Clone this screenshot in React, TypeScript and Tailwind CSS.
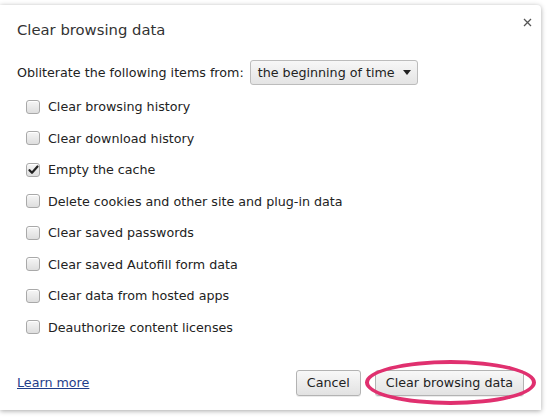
import React from "react";

const items = [
  { label: "Clear browsing history", checked: false },
  { label: "Clear download history", checked: false },
  { label: "Empty the cache", checked: true },
  { label: "Delete cookies and other site and plug-in data", checked: false },
  { label: "Clear saved passwords", checked: false },
  { label: "Clear saved Autofill form data", checked: false },
  { label: "Clear data from hosted apps", checked: false },
  { label: "Deauthorize content licenses", checked: false },
];

function Checkbox({ checked }: { checked: boolean }) {
  return (
    <span className="relative flex h-[14px] w-[14px] items-center justify-center rounded-[3px] border border-[#a9a9a9] bg-gradient-to-b from-[#f6f6f6] to-[#dedede] shadow-[inset_0_1px_0_#fff]">
      {checked && (
        <svg width="11" height="10" viewBox="0 0 11 10" className="absolute left-[1px] top-[1px]">
          <path d="M1.5 5.2 L4 7.8 L9.5 1.5" fill="none" stroke="#222" strokeWidth="2.2" strokeLinecap="round" strokeLinejoin="round" />
        </svg>
      )}
    </span>
  );
}

function Button({ children }: { children: React.ReactNode }) {
  return (
    <button className="flex h-[26px] items-center rounded-[3px] border border-[#b3b3b3] bg-gradient-to-b from-[#f8f8f8] to-[#e2e2e2] px-[10px] text-[12.7px] text-[#222] shadow-[0_1px_0_rgba(0,0,0,0.08)]">
      {children}
    </button>
  );
}

export default function App() {
  return (
    <div
      className="h-[418px] w-[548px] overflow-hidden bg-white pt-[5px]"
      style={{ fontFamily: '"DejaVu Sans", "Liberation Sans", sans-serif' }}
    >
      <div className="relative flex h-[405px] w-[541px] flex-col rounded-tr-[4px] bg-white pl-[17px] pr-[17px] shadow-[0_1px_5px_rgba(0,0,0,0.35)]">
        <button className="absolute right-[6px] top-[9px] flex h-[16px] w-[16px] items-center justify-center">
          <svg width="9" height="9" viewBox="0 0 9 9">
            <path d="M1 1 L8 8 M8 1 L1 8" stroke="#555" strokeWidth="1.3" />
          </svg>
        </button>

        <h1 className="mt-[15px] text-[14.8px] leading-[20px] text-[#333]">Clear browsing data</h1>

        <div className="mt-[20px] flex items-center text-[12.7px] text-[#222]">
          <span>Obliterate the following items from:</span>
          <div className="ml-[6px] flex h-[25px] items-center gap-[8px] rounded-[3px] border border-[#bcbcbc] bg-gradient-to-b from-[#f7f7f7] to-[#e4e4e4] pl-[7px] pr-[6px] text-[#222]">
            <span>the beginning of time</span>
            <svg width="8" height="5" viewBox="0 0 8 5">
              <path d="M0 0 L8 0 L4 5 Z" fill="#222" />
            </svg>
          </div>
        </div>

        <ul className="mt-[6px] flex flex-col pl-[9px]">
          {items.map((it) => (
            <li key={it.label} className="flex h-[31.5px] items-center gap-[8px] text-[12.7px] text-[#222]">
              <Checkbox checked={it.checked} />
              <span>{it.label}</span>
            </li>
          ))}
        </ul>

        <div className="mt-auto mb-[14px] flex items-center justify-between">
          <a href="#" className="text-[12.7px] text-[#1f3d8a] underline">
            Learn more
          </a>
          <div className="flex items-center gap-[14px]">
            <Button>Cancel</Button>
            <div className="relative">
              <Button>Clear browsing data</Button>
              <span className="pointer-events-none absolute left-[-10px] right-[-12px] top-[-10px] bottom-[-9px] rounded-[50%] border-[4px] border-[#e0306f]" />
            </div>
          </div>
        </div>
      </div>
    </div>
  );
}
